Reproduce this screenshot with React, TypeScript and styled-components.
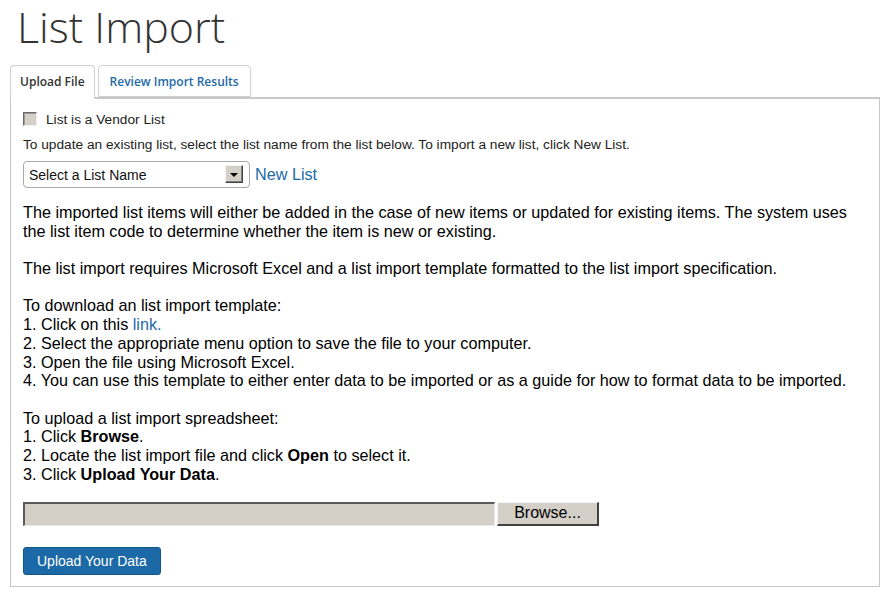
import React from "react";
import styled, { createGlobalStyle } from "styled-components";

const Global = createGlobalStyle`
  html, body { margin: 0; padding: 0; background: #fff; }
  body { font-family: "Liberation Sans", Arial, sans-serif; color: #000; }
`;

const Page = styled.div`
  padding: 0 14px 0 10px;
`;

const Title = styled.h1`
  margin: 0 0 11px 7px;
  font-family: "Open Sans", sans-serif;
  font-weight: 300;
  font-size: 43px;
  line-height: 54px;
  color: #333;
`;

const TabList = styled.div`
  display: flex;
  align-items: flex-end;
  gap: 3px;
  position: relative;
  z-index: 1;
`;

const Tab = styled.div<{ $active?: boolean }>`
  font-family: "Open Sans", sans-serif;
  font-weight: 600;
  font-size: 12px;
  line-height: 16px;
  padding: 8px ${(p) => (p.$active ? "9px" : "11px")} ${(p) => (p.$active ? "9px" : "6px")};
  border: 1px solid #cfcfcf;
  border-bottom: ${(p) => (p.$active ? "none" : "1px solid #cfcfcf")};
  border-radius: 4px 4px 0 0;
  background: #fff;
  color: ${(p) => (p.$active ? "#333" : "#1d6aa8")};
  margin-bottom: ${(p) => (p.$active ? "-2px" : "0")};
  cursor: pointer;
`;

const Panel = styled.div`
  border: 1px solid #c8c8c8;
  border-top: 2px solid #c8c8c8;
  padding: 12px 12px 11px 12px;
`;

const CheckRow = styled.label`
  display: flex;
  align-items: center;
  gap: 9px;
  height: 16px;
  font-size: 13.7px;
  color: #222;
`;

const CheckBox = styled.span`
  display: inline-block;
  width: 12px;
  height: 12px;
  background: #d4d0c8;
  border-top: 1px solid #6a6a6a;
  border-left: 1px solid #6a6a6a;
  border-right: 1px solid #f0f0f0;
  border-bottom: 1px solid #f0f0f0;
  box-shadow: inset 1px 1px 0 #9a9a9a;
`;

const Hint = styled.div`
  margin-top: 11px;
  font-size: 13.7px;
  line-height: 14px;
  color: #222;
`;

const SelectRow = styled.div`
  margin-top: 9px;
  display: flex;
  align-items: center;
  gap: 5px;
`;

const SelectBox = styled.div`
  box-sizing: border-box;
  width: 227px;
  height: 27px;
  border: 1px solid #a8a8a8;
  border-radius: 4px;
  display: flex;
  align-items: center;
  justify-content: space-between;
  padding: 0 6px 0 5px;
  font-size: 14px;
  color: #111;
`;

const DropButton = styled.span`
  box-sizing: border-box;
  width: 18px;
  height: 18px;
  background: #d4d0c8;
  border-top: 1px solid #f4f4f4;
  border-left: 1px solid #f4f4f4;
  border-right: 1px solid #404040;
  border-bottom: 1px solid #404040;
  box-shadow: inset -1px -1px 0 #808080;
  display: flex;
  align-items: center;
  justify-content: center;
  margin-top: -2px;
`;

const Arrow = styled.span`
  width: 0;
  height: 0;
  border-left: 4px solid transparent;
  border-right: 4px solid transparent;
  border-top: 4px solid #000;
  margin-top: 2px;
`;

const Link = styled.a`
  color: #1d6aa8;
  text-decoration: none;
  cursor: pointer;
`;

const NewList = styled(Link)`
  font-size: 16.2px;
  margin-top: -1px;
`;

const Body = styled.div`
  margin-top: 15px;
  font-size: 16.2px;
  line-height: 18.7px;
  color: #000;
`;

const Para = styled.p`
  margin: 0 0 18.7px 0;
  &:last-child { margin-bottom: 0; }
`;

const FileRow = styled.div`
  margin-top: 18px;
  display: flex;
  gap: 2px;
`;

const FileField = styled.div`
  box-sizing: border-box;
  width: 472px;
  height: 24px;
  background: #d4d0c8;
  border-top: 2px solid #5a5a5a;
  border-left: 2px solid #5a5a5a;
  border-right: 1px solid #e8e8e8;
  border-bottom: 1px solid #e8e8e8;
`;

const BrowseButton = styled.button`
  box-sizing: border-box;
  width: 102px;
  height: 24px;
  background: #d4d0c8;
  border: none;
  border-top: 1px solid #f4f4f4;
  border-left: 1px solid #f4f4f4;
  border-right: 2px solid #404040;
  border-bottom: 2px solid #404040;
  font-family: "Liberation Sans", Arial, sans-serif;
  font-size: 16px;
  color: #000;
  padding: 0;
`;

const UploadButton = styled.button`
  margin-top: 21px;
  box-sizing: border-box;
  height: 28px;
  padding: 0 13px;
  background: #1b69a6;
  border: 1px solid #13568a;
  border-radius: 3px;
  color: #fff;
  font-family: "Liberation Sans", Arial, sans-serif;
  font-size: 14px;
  display: block;
`;

export default function App() {
  return (
    <>
      <Global />
      <Page>
        <Title>List Import</Title>
        <TabList>
          <Tab $active>Upload File</Tab>
          <Tab>Review Import Results</Tab>
        </TabList>
        <Panel>
          <CheckRow>
            <CheckBox />
            List is a Vendor List
          </CheckRow>
          <Hint>
            To update an existing list, select the list name from the list below. To import a new list, click New List.
          </Hint>
          <SelectRow>
            <SelectBox>
              <span>Select a List Name</span>
              <DropButton>
                <Arrow />
              </DropButton>
            </SelectBox>
            <NewList>New List</NewList>
          </SelectRow>
          <Body>
            <Para>
              The imported list items will either be added in the case of new items or updated for existing items. The system uses the list item code to determine whether the item is new or existing.
            </Para>
            <Para>
              The list import requires Microsoft Excel and a list import template formatted to the list import specification.
            </Para>
            <Para>
              To download an list import template:
              <br />
              1. Click on this <Link>link.</Link>
              <br />
              2. Select the appropriate menu option to save the file to your computer.
              <br />
              3. Open the file using Microsoft Excel.
              <br />
              4. You can use this template to either enter data to be imported or as a guide for how to format data to be imported.
            </Para>
            <Para>
              To upload a list import spreadsheet:
              <br />
              1. Click <b>Browse</b>.
              <br />
              2. Locate the list import file and click <b>Open</b> to select it.
              <br />
              3. Click <b>Upload Your Data</b>.
            </Para>
          </Body>
          <FileRow>
            <FileField />
            <BrowseButton>Browse...</BrowseButton>
          </FileRow>
          <UploadButton>Upload Your Data</UploadButton>
        </Panel>
      </Page>
    </>
  );
}
